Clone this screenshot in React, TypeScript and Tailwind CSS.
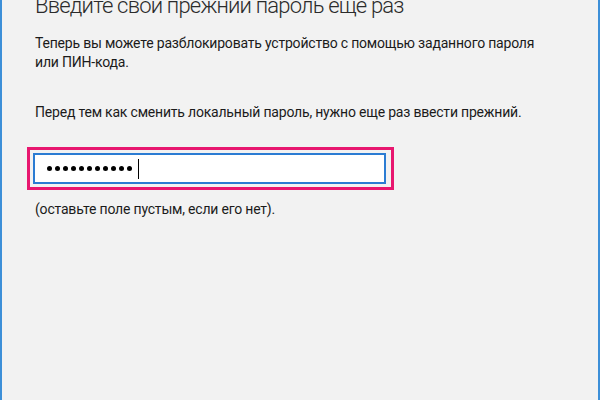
const font = "font-['Segoe_UI',Roboto,'Noto_Sans',sans-serif]";

function PasswordDots({ count }: { count: number }) {
  return (
    <div className="flex items-center gap-[3px]">
      {Array.from({ length: count }).map((_, i) => (
        <span key={i} className="block h-[5px] w-[5px] rounded-full bg-black" />
      ))}
      <span className="ml-[3px] block h-[20px] w-px bg-black" />
    </div>
  );
}

export default function App() {
  return (
    <div
      className={`h-[400px] w-[600px] overflow-hidden border-x-2 border-[#3d8fd8] bg-[#f2f2f2] text-[#1b1b1b] ${font}`}
    >
      <div className="pl-[33px]">
        <h1 className="mt-[-6px] text-[22px] font-light leading-[24px] tracking-[-0.8px] text-[#2b2b2b]">
          Введите свой прежний пароль еще раз
        </h1>

        <p className="mt-[16px] w-[500px] text-[14px] leading-[19px] tracking-[-0.2px]">
          Теперь вы можете разблокировать устройство с помощью заданного пароля
          или ПИН-кода.
        </p>

        <p className="mt-[31px] text-[14px] leading-[19px] tracking-[-0.2px]">
          Перед тем как сменить локальный пароль, нужно еще раз ввести прежний.
        </p>

        <div className="ml-[-8px] mt-[25px] w-[367px] border-[3px] border-[#e8176f] p-[3px] pr-[5px]">
          <div className="flex h-[31px] items-center border-2 border-[#2b7cd3] bg-white pl-[12px]">
            <PasswordDots count={11} />
          </div>
        </div>

        <p className="mt-[10px] text-[14px] leading-[19px] tracking-[-0.2px]">
          (оставьте поле пустым, если его нет).
        </p>
      </div>
    </div>
  );
}
